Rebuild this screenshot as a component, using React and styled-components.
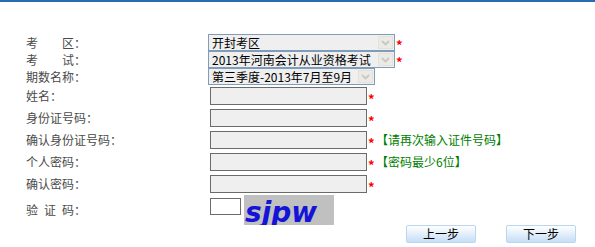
import React from "react";
import styled, { createGlobalStyle } from "styled-components";

const GlobalStyle = createGlobalStyle`
  html, body {
    margin: 0;
    padding: 0;
    background: #fff;
  }
  body {
    font-family: "Noto Sans CJK SC", "Liberation Sans", sans-serif;
    font-size: 12px;
  }
`;

const selects = [
  { label: "考\u3000\u3000区：", value: "开封考区", width: 187, star: true },
  { label: "考\u3000\u3000试：", value: "2013年河南会计从业资格考试", width: 187, star: true },
  { label: "期数名称：", value: "第三季度-2013年7月至9月", width: 167, star: false },
];

const inputs = [
  { label: "姓名：", star: true },
  { label: "身份证号码：", star: true },
  { label: "确认身份证号码：", star: true, tip: "【请再次输入证件号码】" },
  { label: "个人密码：", star: true, tip: "【密码最少6位】" },
  { label: "确认密码：", star: true },
];

const ChevronDown = () => (
  <svg width="9" height="6" viewBox="0 0 9 6">
    <path d="M1 1 L4.5 4.5 L8 1" fill="none" stroke="#c9c8c0" strokeWidth="1.8" />
  </svg>
);

const App = () => {
  return (
    <Page>
      <GlobalStyle />
      <TopBar />
      <Form>
        {selects.map((item, index) => (
          <Row key={index} h={17}>
            <Label>{item.label}</Label>
            <Select w={item.width}>
              <SelectText>{item.value}</SelectText>
              <ArrowBox>
                <ChevronDown />
              </ArrowBox>
            </Select>
            {item.star && <Star>*</Star>}
          </Row>
        ))}
        {inputs.map((item, index) => (
          <Row key={index} h={22}>
            <Label>{item.label}</Label>
            <TextBox />
            {item.star && <Star>*</Star>}
            {item.tip && <Tip>{item.tip}</Tip>}
          </Row>
        ))}
        <CaptchaRow>
          <Label>{"验\u2002证\u2002码："}</Label>
          <CodeBox />
          <Captcha>sjpw</Captcha>
        </CaptchaRow>
        <ButtonRow>
          <StepButton>上一步</StepButton>
          <StepButton>下一步</StepButton>
        </ButtonRow>
      </Form>
    </Page>
  );
};

const Page = styled.div`
  width: 595px;
  height: 247px;
  overflow: hidden;
  background: #fff;
`;

const TopBar = styled.div`
  height: 2px;
  background: #2a6cb0;
`;

const Form = styled.div`
  padding: 32px 0 0 26px;
`;

const Row = styled.div`
  display: flex;
  align-items: center;
  height: ${(p) => p.h}px;
`;

const Label = styled.div`
  width: 182px;
  flex-shrink: 0;
  color: #4a4a4a;
  font-size: 12px;
  line-height: 14px;
  white-space: pre;
`;

const Select = styled.div`
  box-sizing: border-box;
  width: ${(p) => p.w}px;
  height: 17px;
  border: 1px solid #7f9db9;
  background: #efefef;
  display: flex;
  align-items: center;
  justify-content: space-between;
  padding: 0 1px 0 3px;
`;

const SelectText = styled.span`
  color: #000;
  font-size: 12px;
  line-height: 14px;
  white-space: nowrap;
`;

const ArrowBox = styled.span`
  width: 15px;
  height: 13px;
  background: #ebeae5;
  border: 1px solid #e2e1db;
  box-sizing: border-box;
  display: flex;
  align-items: center;
  justify-content: center;
`;

const Star = styled.span`
  color: #f00;
  font-weight: bold;
  font-size: 13px;
  line-height: 9px;
  height: 9px;
  margin: 4px 0 0 1px;
  width: 8px;
`;

const TextBox = styled.div`
  box-sizing: border-box;
  width: 157px;
  height: 18px;
  margin-left: 2px;
  border: 1px solid #6b6b6b;
  background: #efefef;
`;

const Tip = styled.span`
  color: #008000;
  font-size: 12px;
  line-height: 14px;
  white-space: nowrap;
`;

const CaptchaRow = styled.div`
  display: flex;
  align-items: center;
  height: 30px;
`;

const CodeBox = styled.div`
  box-sizing: border-box;
  width: 31px;
  height: 17px;
  margin: 0 3px 8px 2px;
  border: 1px solid #6b6b6b;
  background: #fff;
`;

const Captcha = styled.div`
  width: 90px;
  height: 30px;
  background: #c0c0c0;
  color: #1414d8;
  font-family: "DejaVu Sans", sans-serif;
  font-weight: bold;
  font-style: italic;
  font-size: 28px;
  line-height: 30px;
  padding: 3px 0 0 1px;
  box-sizing: border-box;
  overflow: hidden;
`;

const ButtonRow = styled.div`
  display: flex;
  justify-content: flex-end;
  gap: 30px;
  padding-right: 19px;
`;

const StepButton = styled.div`
  box-sizing: border-box;
  width: 70px;
  height: 18px;
  border: 1px solid #bcd6f0;
  border-radius: 2px;
  background: linear-gradient(#ffffff, #c6def7);
  color: #000;
  font-size: 12px;
  line-height: 16px;
  text-align: center;
  cursor: pointer;
`;

export default App;
